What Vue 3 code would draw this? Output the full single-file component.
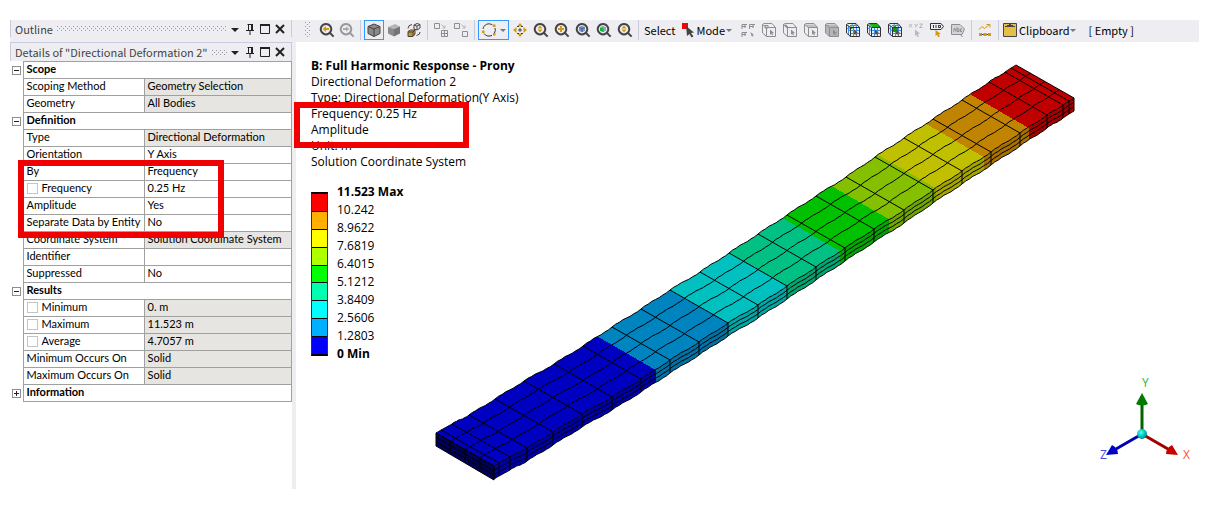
<script setup>
const rows = [
  { group: 'Scope', open: true },
  { label: 'Scoping Method', value: 'Geometry Selection', locked: true },
  { label: 'Geometry', value: 'All Bodies', locked: true },
  { group: 'Definition', open: true },
  { label: 'Type', value: 'Directional Deformation', locked: true },
  { label: 'Orientation', value: 'Y Axis' },
  { label: 'By', value: 'Frequency' },
  { label: 'Frequency', value: '0.25 Hz', check: true },
  { label: 'Amplitude', value: 'Yes' },
  { label: 'Separate Data by Entity', value: 'No' },
  { label: 'Coordinate System', value: 'Solution Coordinate System', locked: true },
  { label: 'Identifier', value: '' },
  { label: 'Suppressed', value: 'No' },
  { group: 'Results', open: true },
  { label: 'Minimum', value: '0. m', check: true, locked: true },
  { label: 'Maximum', value: '11.523 m', check: true, locked: true },
  { label: 'Average', value: '4.7057 m', check: true, locked: true },
  { label: 'Minimum Occurs On', value: 'Solid', locked: true },
  { label: 'Maximum Occurs On', value: 'Solid', locked: true },
  { group: 'Information', open: false },
]

const panels = [
  { title: 'Outline' },
  { title: 'Details of "Directional Deformation 2"' },
]

const info = [
  'Directional Deformation 2',
  'Type: Directional Deformation(Y Axis)',
  'Frequency: 0.25 Hz',
  'Amplitude',
  'Unit: m',
  'Solution Coordinate System',
]

const legendColors = ['#ff0000', '#ffb000', '#ffff00', '#b0ff00', '#00ff00', '#00ffb0', '#00ffff', '#00b0ff', '#0000ff']
const legendLabels = ['11.523 Max', '10.242', '8.9622', '7.6819', '6.4015', '5.1212', '3.8409', '2.5606', '1.2803', '0 Min']

/* ---- toolbar icons: 16 x 16 shapes ---- */
const dark = '#444444'
const mute = '#8e8e8e'
const gold = '#d19a10'
const s = (d, stroke = dark, w = 1) => ({ d, stroke, w, fill: 'none' })
const f = (d, fill = dark) => ({ d, fill, stroke: 'none', w: 0 })
const lens = (c) => [s('M7 2a5.2 5.2 0 1 0 .01 0z', c, 2), s('M10.8 10.8L14.6 14.6', c, 2)]
const boxFace = 'M5.5 5.5H14.5V14.5H5.5z'
const boxBack = 'M5.5 5.5L1.500 2.500V11L5.500 14.500M1.500 2.500Q2 1.500 4 1.500H11L14.500 5.500'
const cursor = (c) => f('M9 7.500L13 11L11.200 11.200L12 13L11 13.500L10.200 11.800L9 12.800z', c)
const pickBox = (...extra) => [...extra, s(boxFace, mute), s(boxBack, mute), cursor(mute)]
const meshBox = (...extra) => [
  s('M8.500 5.500V14.500M11.500 5.500V14.500M5.500 8.500H14.500M5.500 11.500H14.500M3.500 4V13M2 6L5.500 9M5 3.500H12.500M7 2L9 5.500M10 2L12 5.500', '#3b8fe8'),
  ...extra,
  s(boxFace, '#333333'),
  s(boxBack, '#333333'),
  cursor('#555555'),
]

const groups = [
  [
    { name: 'Previous view', shapes: [...lens(dark), f('M3.500 7L7 4V6H10V8H7V10z', gold)] },
    { name: 'Next view', shapes: [...lens('#999999'), f('M10.500 7L7 4.500V6H4V8H7V9.500z', '#aaaaaa')] },
  ],
  [
    { name: 'Shaded with edges', on: true, shapes: [f('M2 4.500L8 2L14 4.500V11.500L8 14.500L2 11.500z', '#8a8a8a'), s('M2 4.500L8 2L14 4.500V11.500L8 14.500L2 11.500zM2 4.500L8 7L14 4.500M8 7V14.500', dark, 1)] },
    { name: 'Shaded', shapes: [f('M2 5L9 2L14 4.500L8 7z', '#b5b5b5'), f('M2 5L8 7V14.500L2 11.500z', '#8a8a8a'), f('M8 7L14 4.500V11.500L8 14.500z', '#757575')] },
    { name: 'Swap bodies', shapes: [s('M8 3L11 1.500L14 2.500V6L11 8L8 7zM8 3L11 4.200L14 2.500M11 4.200V8', '#444444'), f('M2 9.500L4.500 8H9V12L7 14.500H2z', '#c99520'), s('M2 9.500L4.500 8H9V12L7 14.500H2zM2 10H7V14M7 10L9 8', '#444444'), s('M2 6.500Q2 3 6 2.500M14 10Q14 13 10.500 13.500', '#444444')] },
  ],
  [
    { name: 'Expand selection', shapes: [s('M1.500 1.500H6.500V6.500H1.500zM8.500 8.500H14.500V14.500H8.500zM11.500 8.500V14.500M8.500 11.500H14.500', mute), s('M8.500 2.500L12 6M12 3.500V6H9.500', '#b5b5b5')] },
    { name: 'Move selection', shapes: [s('M1.500 1.500H6.500V6.500H1.500zM9.500 9.500H14.500V14.500H9.500z', mute), s('M8.500 2.500L12 6M12 3.500V6H9.500', '#b5b5b5')] },
  ],
  [
    { name: 'Rotate', on: true, menu: true, shapes: [s('M2 7A6 6 0 0 1 11.500 3M14 6A6 6 0 0 1 13.500 11M11 13.300A6 6 0 0 1 3 11.500', '#333333', 1), f('M12 2.500H14.500V5H12zM1 8.500H3.500V11H1zM12 11H14.500V13.500H12z', gold)] },
    { name: 'Pan', roomy: true, shapes: [f('M8 1L11 4.500H5zM8 15L11 11.500H5zM1 8L4.500 5V11zM15 8L11.500 5V11z', gold), s('M8 6V10M6 8H10', dark, 1), s('M5 4.500H7M9 4.500H11M5 11.500H7M9 11.500H11', dark)] },
    { name: 'Zoom', roomy: true, shapes: [...lens(dark), f('M7 3.500L9.500 6.500H4.500zM7 10.500L9.500 7.500H4.500z', gold)] },
    { name: 'Box zoom', roomy: true, shapes: [...lens(dark), f('M6 4H8V6H10V8H8V10H6V8H4V6H6z', gold)] },
    { name: 'Zoom to fit', roomy: true, shapes: [...lens(dark), f('M7 3.800L10 5.300V8.700L7 10.300L4 8.700V5.300z', '#7793c4'), s('M4.500 5.500L7 6.700L9.500 5.500M7 6.700V10', '#48618f')] },
    { name: 'Zoom to selection', roomy: true, shapes: [...lens(dark), f('M7 3.800L10 5.300V8.700L7 10.300L4 8.700V5.300z', '#8da6ca'), f('M4 6H7.500V10L4 8.700z', '#13bb2c')] },
    { name: 'Magnifier window', roomy: true, shapes: [...lens(dark), f('M7 3.500L9.500 6.500H4.500zM7 10.500L9.500 7.500H4.500z', gold)] },
  ],
]

const pickTools = [
  { name: 'Box select', shapes: [s('M2 7V2.500H7M2 4.500H6M9.500 7V2.500H15M9.500 4.500H14M2 15V10.500H7M2 12.500H6', mute), s('M5 3V6M13 3V6M5 11V14', mute), f('M10.500 10L14 13L12.500 13.500L13 15L11.500 14z', mute)] },
  { name: 'Vertex', shapes: pickBox(s('M4 3.500H7V6H4z', mute)) },
  { name: 'Edge', shapes: pickBox(s('M3 3L6 6', mute, 2)) },
  { name: 'Face', shapes: pickBox(f('M2 2.500H11L14.500 5.500H5.500z', '#c0c0c0')) },
  { name: 'Body', shapes: pickBox(f('M2 2.500H11L14.500 5.500V14.500H5.500L2 11z', '#b5b5b5')) },
  { name: 'Node', shapes: meshBox(f('M4.500 4.500H7.500V7H4.500z', '#16a716')) },
  { name: 'Element face', shapes: meshBox(f('M3 2H11L14 5H6z', '#16b516')) },
  { name: 'Element', shapes: meshBox(f('M5 5L8 4L11 6V10H6z', '#179617')) },
  { name: 'Coordinates', shapes: [s('M1 2L4 5.500M4 2L1 5.500M6.500 2L8 4M9.500 2L7.500 5.500M11.500 2H14.500L11.500 5.500H14.500', '#b4b4b4'), f('M7 7.500L12 11.500L9.800 12L11 14.500L9.500 15L8.500 12.700L7 14z', '#b9b9b9')] },
  { name: 'Label', shapes: [s('M1.500 1.500H12L14.500 4.500L12 7.500H1.500z', '#333333', 1), s('M4.500 3V6M7 3V6M9.500 3.500H11.500V5.500H9.500z', '#333333'), f('M6.500 8L12 12L9.800 12.300L10.800 15H9L8.200 12.800L6.500 14z', gold)] },
  { name: 'Annotation', shapes: [f('M2 3H10L14.500 7L12 12H2z', '#d4d4d4'), s('M1.500 2.500H10L14.500 7L12 12.500H1.500zM3.500 9.500L4.500 6L6 9.500M7 5V9.500H9V7H7M12 7H10.500V9.500H12M10 12L12.500 15', mute)] },
]

const chartTool = { name: 'Chart', shapes: [s('M2 7.500L5 4.500L7.500 6.500L12.500 2.500M9.500 2.500H13V5.500', gold, 1), s('M3 12.500H13', dark, 1), f('M2 11H5V14H2zM6.500 11H9.500V14H6.500zM11 11H14V14H11z', gold)] }

/* ---- beam geometry ---- */
const nodes = [
  [494, 466], [499, 463], [510, 457], [527, 448], [553, 432], [582, 414], [612, 397], [641, 379],
  [670, 360], [699, 342], [728, 323], [758, 305], [787, 286], [816, 267], [845, 248], [874, 229],
  [904, 210], [933, 190], [962, 171], [991, 152], [1020, 133], [1047, 115], [1063, 105], [1069, 101], [1074, 98],
]
const across = [-58, -33]
const depth = 13

function edge(dx, dy) {
  const pts = []
  for (let i = 0; i < nodes.length - 1; i++) {
    const [x0, y0] = nodes[i]
    const [x1, y1] = nodes[i + 1]
    const amp = x1 - x0 > 14 ? 0.5 : 0
    for (let k = 0; k < 8; k++) {
      const t = k / 8
      const wave = amp * (Math.sin(t * Math.PI * 2) + Math.sin(t * Math.PI * 6) / 2)
      pts.push([x0 + (x1 - x0) * t + dx, y0 + (y1 - y0) * t + dy - wave])
    }
  }
  const end = nodes[nodes.length - 1]
  pts.push([end[0] + dx, end[1] + dy])
  return pts
}
const toText = (pts) => pts.map(([x, y]) => x.toFixed(1) + ',' + y.toFixed(1)).join(' ')

const near = edge(0, 0)
const topShape = toText([...near, ...edge(...across).reverse()])
const sideShape = toText([...near, ...edge(0, depth).reverse()])
const longLines = [
  ...[0, 1, 2, 3, 4].map((k) => toText(edge((across[0] * k) / 4, (across[1] * k) / 4))),
  ...[1, 2, 3].map((k) => toText(edge(0, (depth * k) / 3))),
]
const sections = nodes.map(([x, y]) => toText([[x + across[0], y + across[1]], [x, y], [x, y + depth]]))

const cuts = [[460, 487], [656, 370], [728, 323], [787, 286], [840, 251], [889, 219], [936, 188], [984, 157], [1029, 128], [1110, 75]]
const bandColors = ['#0000c0', '#0084c0', '#00c0c0', '#00c084', '#00c000', '#84c000', '#c0c000', '#c08400', '#c00000']
const bands = bandColors.map((fill, i) => {
  const [ax, ay] = cuts[i]
  const [bx, by] = cuts[i + 1]
  return {
    fill,
    top: toText([[ax + 29, ay + 17], [bx + 29, by + 17], [bx - 87, by - 50], [ax - 87, ay - 50]]),
    x: ax,
    w: bx - ax,
  }
})
</script>

<template>
  <main class="workspace">
    <aside class="side">
      <section v-for="(p, i) in panels" :key="p.title" class="panel">
        <header class="caption">
          <h2>{{ p.title }}</h2>
          <svg class="dots" aria-hidden="true">
            <defs>
              <pattern :id="'dots' + i" width="4" height="4" patternUnits="userSpaceOnUse">
                <path d="M0 0h1v1h-1zM2 2h1v1h-1z" fill="#9a9aa2" />
              </pattern>
            </defs>
            <rect width="100%" height="5" :fill="'url(#dots' + i + ')'" />
          </svg>
          <button type="button" aria-label="Window menu">
            <svg viewBox="0 0 12 12"><path d="M2 5h8L6 9z" fill="#222" /></svg>
          </button>
          <button type="button" aria-label="Pin">
            <svg viewBox="0 0 12 12"><path d="M3.500 1.500h5M4.500 1v6M2 7.500h8M6 7.500V12" fill="none" stroke="#222" /><path d="M7 1h2v6H7z" fill="#222" /></svg>
          </button>
          <button type="button" aria-label="Maximize">
            <svg viewBox="0 0 12 12"><path d="M1.500 1.500h9v9h-9z" fill="none" stroke="#222" /><path d="M1 1h10v2H1z" fill="#222" /></svg>
          </button>
          <button type="button" aria-label="Close">
            <svg viewBox="0 0 12 12"><path d="M2 2l8 8M10 2l-8 8" stroke="#222" stroke-width="2" /></svg>
          </button>
        </header>
      </section>

      <table class="details">
        <colgroup><col class="c-tree" /><col class="c-name" /><col /></colgroup>
        <tbody>
          <tr v-for="(r, i) in rows" :key="i">
            <td class="tree">
              <button v-if="r.group" type="button" class="toggle" :aria-label="'Toggle ' + r.group">
                <svg viewBox="0 0 7 7"><path :d="r.open ? 'M1 3.500h5' : 'M1 3.500h5M3.500 1v5'" stroke="#222" /></svg>
              </button>
            </td>
            <th v-if="r.group" colspan="2" class="group">{{ r.group }}</th>
            <template v-else>
              <td class="name">
                <label v-if="r.check"><input type="checkbox" />{{ r.label }}</label>
                <template v-else>{{ r.label }}</template>
              </td>
              <td class="value" :class="{ locked: r.locked }">{{ r.value }}</td>
            </template>
          </tr>
        </tbody>
      </table>
      <div class="mark mark-details"></div>
    </aside>

    <div class="splitter"></div>

    <section class="main">
      <nav class="toolbar">
        <svg class="grip" viewBox="0 0 6 16" aria-hidden="true">
          <path d="M0 0h1v1h-1zM4 0h1v1h-1zM2 2h1v1h-1zM0 4h1v1h-1zM4 4h1v1h-1zM2 6h1v1h-1zM0 8h1v1h-1zM4 8h1v1h-1zM2 10h1v1h-1zM0 12h1v1h-1zM4 12h1v1h-1zM2 14h1v1h-1z" fill="#9a9aa2" />
        </svg>
        <template v-for="(g, gi) in groups" :key="gi">
          <button v-for="t in g" :key="t.name" type="button" class="tool" :class="{ on: t.on, wide: t.menu, roomy: t.roomy }" :aria-label="t.name">
            <svg class="icon" viewBox="0 0 16 16">
              <path v-for="(p, k) in t.shapes" :key="k" :d="p.d" :fill="p.fill" :stroke="p.stroke" :stroke-width="p.w" />
            </svg>
            <span v-if="t.menu" class="arrow"></span>
          </button>
          <span class="sep"></span>
        </template>
        <span class="word">Select</span>
        <button type="button" class="text-tool mode">
          <svg class="icon" viewBox="0 0 16 16">
            <path d="M2 1h6v6H2z" fill="#f00" />
            <path d="M6 4l8 6.500-3 .5 2.500 3.500-2 1-2-3.500L7 14z" fill="#444" />
          </svg>Mode<span class="arrow"></span>
        </button>
        <button v-for="t in pickTools" :key="t.name" type="button" class="tool roomy" :aria-label="t.name">
          <svg class="icon" viewBox="0 0 16 16">
            <path v-for="(p, k) in t.shapes" :key="k" :d="p.d" :fill="p.fill" :stroke="p.stroke" :stroke-width="p.w" />
          </svg>
        </button>
        <span class="sep"></span>
        <button type="button" class="tool" :aria-label="chartTool.name">
          <svg class="icon" viewBox="0 0 16 16">
            <path v-for="(p, k) in chartTool.shapes" :key="k" :d="p.d" :fill="p.fill" :stroke="p.stroke" :stroke-width="p.w" />
          </svg>
        </button>
        <span class="sep"></span>
        <button type="button" class="text-tool">
          <svg class="icon" viewBox="0 0 16 16">
            <path d="M1.500 1.500h13v13h-13z" fill="#e6bd45" stroke="#444" />
            <path d="M3 4.500h10M5 3.500h6M7 2.500h2" stroke="#444" />
          </svg>Clipboard<span class="arrow"></span>
        </button>
        <span class="word empty">[ Empty ]</span>
      </nav>

      <div class="view">
        <svg class="scene" viewBox="296 42 903 447" role="img" aria-label="Deformed beam">
          <defs>
            <clipPath id="topClip"><polygon :points="topShape" /></clipPath>
            <clipPath id="sideClip"><polygon :points="sideShape" /></clipPath>
            <radialGradient id="ball" cx="0.4" cy="0.35" r="0.7">
              <stop offset="0" stop-color="#5ff" /><stop offset="0.5" stop-color="#0cc" /><stop offset="1" stop-color="#077" />
            </radialGradient>
          </defs>
          <g shape-rendering="crispEdges">
            <g clip-path="url(#topClip)">
              <polygon v-for="b in bands" :key="b.fill" :points="b.top" :fill="b.fill" />
            </g>
            <g clip-path="url(#sideClip)">
              <rect v-for="b in bands" :key="b.fill" :x="b.x" y="60" :width="b.w" height="430" :fill="b.fill" />
              <rect x="430" y="60" width="660" height="430" fill="#000" opacity="0.14" />
            </g>
          </g>
          <path d="M436 433L494 466V480L436 446z" fill="#000058" />
          <g fill="none" stroke="#000" stroke-width="1">
            <path d="M436 433V446L494 480V466zM450 441V454M465 450V463M480 458V471M436 437L494 471M436 442L494 475" />
            <polyline v-for="(l, i) in longLines" :key="'l' + i" :points="l" />
            <polyline v-for="(l, i) in sections" :key="'s' + i" :points="l" />
          </g>
          <g class="triad">
            <path d="M1142 434V403" stroke="#006400" stroke-width="3" />
            <path d="M1142 393l6 11q-6 3-12 0z" fill="#007c00" />
            <path d="M1142 434L1168 449" stroke="#a00000" stroke-width="3" />
            <path d="M1178 455l-12-1q0-6 6-9z" fill="#c80000" />
            <path d="M1142 434L1116 449" stroke="#0000b4" stroke-width="3" />
            <path d="M1106 455l12-1q0-6-6-9z" fill="#0000c8" />
            <circle cx="1142" cy="434" r="5" fill="url(#ball)" />
            <text x="1142" y="387" fill="#2db52d">Y</text>
            <text x="1183" y="459" fill="#ff4a4a">X</text>
            <text x="1100" y="459" fill="#4a4ae0">Z</text>
          </g>
        </svg>

        <div class="info">
          <h1>B: Full Harmonic Response - Prony</h1>
          <p v-for="l in info" :key="l">{{ l }}</p>
        </div>
        <div class="legend">
          <div class="scale">
            <span v-for="c in legendColors" :key="c" class="swatch" :style="{ background: c }"></span>
          </div>
          <ol>
            <li v-for="l in legendLabels" :key="l">{{ l }}</li>
          </ol>
        </div>
        <div class="mark mark-info"></div>
      </div>
    </section>
  </main>
</template>

<style>
body {
  background: #fff;
}
</style>

<style scoped>
.workspace {
  box-sizing: border-box;
  min-height: 100vh;
  padding: 20px 7px 23px 10px;
  display: grid;
  grid-template-columns: 282px 4px minmax(0, 1fr);
  font-family: "Noto Sans CJK KR", "Noto Sans", sans-serif;
  font-size: 11px;
  color: #000;
}
button {
  margin: 0;
  padding: 0;
  border: 0;
  background: none;
  font: inherit;
  color: inherit;
}
svg {
  display: block;
}
.side {
  position: relative;
}
.splitter {
  background: #eeeef0;
}

.panel {
  background: #eeeef2;
}
.panel:first-child {
  height: 22px;
}
.caption {
  box-sizing: border-box;
  display: flex;
  align-items: center;
  height: 17px;
  padding: 0 4px;
  border: solid #c8cbdd;
  border-width: 0 1px;
}
.panel + .panel .caption {
  height: 19px;
  border-top-width: 1px;
}
.caption h2 {
  margin: 0 4px 0 0;
  font-size: 11px;
  font-weight: 400;
  line-height: 16px;
  color: #444;
  white-space: nowrap;
}
.dots {
  flex: 1;
  min-width: 0;
  width: 0;
  height: 5px;
}
.caption button {
  flex: none;
  width: 15px;
  height: 12px;
  display: flex;
  justify-content: center;
}
.caption button svg {
  width: 12px;
  height: 12px;
}

.details {
  width: 100%;
  table-layout: fixed;
  border-collapse: collapse;
  font-family: Lato, "Noto Sans", sans-serif;
}
.c-tree {
  width: 13px;
}
.c-name {
  width: 121px;
}
.details tr {
  height: 17px;
}
.details td,
.details th {
  box-sizing: border-box;
  height: 17px;
  padding: 0 3px;
  border: 1px solid #a0a0a0;
  line-height: 14px;
  text-align: left;
  vertical-align: top;
  white-space: nowrap;
}
.details .tree {
  padding: 4px 0 0 2px;
  border: 0;
}
.details .locked {
  background: #e7e5e1;
}
.toggle {
  display: block;
  box-sizing: border-box;
  width: 9px;
  height: 9px;
  border: 1px solid #8e8e8e;
}
.toggle svg {
  width: 7px;
  height: 7px;
}
.name label {
  display: flex;
  align-items: center;
  gap: 4px;
}
.name input {
  appearance: none;
  box-sizing: border-box;
  width: 11px;
  height: 11px;
  margin: 0;
  border: 1px solid #c4c4c4;
  background: #fff;
}

.toolbar {
  display: flex;
  align-items: flex-start;
  height: 22px;
  padding-left: 9px;
  background: #eeeef2;
}
.grip {
  width: 6px;
  height: 16px;
  margin: 2px 6px 0 0;
}
.tool {
  box-sizing: border-box;
  width: 20px;
  height: 20px;
  display: flex;
  align-items: center;
  justify-content: center;
  border: 1px solid transparent;
}
.tool.roomy {
  width: 21px;
}
.tool.on {
  border-color: #3399ff;
}
.tool.wide {
  width: 31px;
  gap: 3px;
}
.icon {
  flex: none;
  width: 16px;
  height: 16px;
}
.sep {
  width: 1px;
  height: 20px;
  margin: 0 3px;
  background: #c8cbdd;
}
.arrow {
  flex: none;
  border: 3px solid transparent;
  border-top-color: #777;
  border-bottom: 0;
}
.word {
  padding: 0 4px 0 2px;
  line-height: 20px;
}
.text-tool {
  display: flex;
  align-items: center;
  gap: 1px;
  height: 20px;
}
.text-tool.mode {
  margin-right: 5px;
}
.empty {
  padding-left: 12px;
}

.view {
  position: relative;
  padding: 16px 0 0 15px;
  font-family: "Open Sans", "Noto Sans", sans-serif;
  font-size: 12px;
}
.scene {
  position: absolute;
  left: 0;
  top: 0;
  width: 100%;
  height: auto;
}
.triad text {
  font-size: 12px;
}
.info,
.legend {
  position: relative;
}
.info h1,
.info p {
  margin: 0;
  font-size: 12px;
  line-height: 16px;
}
.legend {
  display: flex;
  gap: 9px;
  margin-top: 13px;
}
.scale {
  box-sizing: border-box;
  display: flex;
  flex-direction: column;
  width: 17px;
  height: 164px;
  margin-top: 9px;
  border: 1px solid #333;
  border-top: 2px solid #000;
  border-bottom: 2px solid #000;
}
.swatch {
  flex: 1;
}
.swatch + .swatch {
  border-top: 1px solid #000;
}
.legend ol {
  margin: 0;
  padding: 0;
  list-style: none;
  line-height: 18px;
}
.legend li:first-child,
.legend li:last-child {
  font-weight: 700;
}

.mark {
  position: absolute;
  box-sizing: border-box;
  border: 6px solid #f00000;
}
.mark-details {
  left: 8px;
  top: 140px;
  width: 206px;
  height: 78px;
}
.mark-info {
  left: -2px;
  top: 60px;
  width: 175px;
  height: 46px;
}
</style>
